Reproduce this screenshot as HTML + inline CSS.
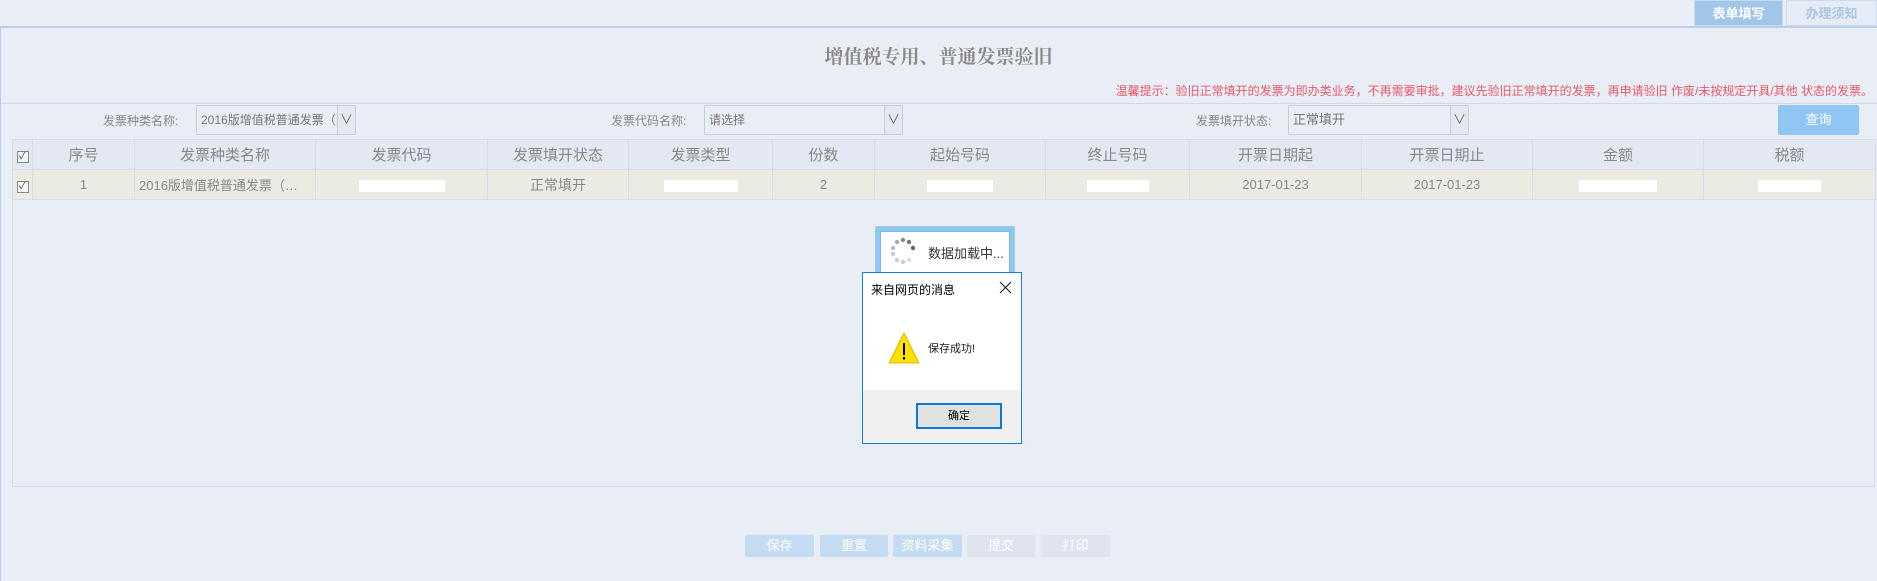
<!DOCTYPE html>
<html><head><meta charset="utf-8"><style>
*{margin:0;padding:0;box-sizing:border-box}
body{width:1877px;height:581px;background:#e9edf5;font-family:"Liberation Sans","Noto Sans CJK SC",sans-serif;position:relative;overflow:hidden;color:#888}
.a{position:absolute}
.tab{top:0;height:26px;font-size:13px;text-align:center;line-height:26px;color:#fff;font-weight:bold}
.lbl{font-size:12px;color:#888;top:112px}
.sel{background:#e9edf5;border:1px solid #c6ccd8;border-radius:2px;height:30px;font-size:12px;color:#777;line-height:28px;padding-left:4px}
.sel b{position:absolute;right:0;top:0;width:18px;height:28px;border-left:1px solid #c6ccd8;background:#e4e8f0;font-weight:normal;text-align:center;font-size:13px;color:#666}
table{border-collapse:collapse;position:absolute;left:12px;top:139px;width:1863px;table-layout:fixed}
td,th{border:1px solid #d6dce8;text-align:center;font-weight:normal;color:#888;overflow:hidden;white-space:nowrap}
th{height:30px;background:#e3e8f2;font-size:15px}
td{height:30px;background:#ebebe4;font-size:13px}
.w{display:inline-block;background:#fff;height:12px;vertical-align:middle}
.btn{top:535px;height:22px;font-size:13px;color:#fff;text-align:center;line-height:22px;border-radius:2px}
.cb{display:inline-block;width:12px;height:12px;border:1px solid #888;font-size:10px;line-height:10px;color:#444;background:#f4f4f4}
</style></head><body>
<div class="a" style="left:0;top:26px;width:1877px;height:2px;background:#b7cfe9"></div>
<div class="a" style="left:0;top:26px;width:1px;height:555px;background:#b7cfe9"></div>
<div class="a tab" style="left:1694px;width:89px;background:#a2c6ea;border:1px solid #c5dbef">表单填写</div>
<div class="a tab" style="left:1786px;width:91px;background:#e6ecf6;color:#a9c6e6;border:1px solid #d0dcec">办理须知</div>
<div class="a" style="left:0;width:1877px;top:42px;text-align:center;font-size:19px;font-weight:bold;color:#8a8a8a;font-family:'Liberation Serif','Noto Serif CJK SC',serif">增值税专用、普通发票验旧</div>
<div class="a" style="right:4px;top:82px;font-size:12px;color:#e8596a">温馨提示：验旧正常填开的发票为即办类业务，不再需要审批，建议先验旧正常填开的发票，再申请验旧 作废/未按规定开具/其他 状态的发票。</div>
<div class="a" style="left:1px;top:103px;width:1876px;height:1px;background:#d2d8e4"></div>
<div class="a lbl" style="left:103px">发票种类名称:</div>
<div class="a sel" style="left:196px;top:105px;width:160px">2016版增值税普通发票（:<b>∨</b></div>
<div class="a lbl" style="left:611px">发票代码名称:</div>
<div class="a sel" style="left:704px;top:105px;width:199px">请选择<b>∨</b></div>
<div class="a lbl" style="left:1196px">发票填开状态:</div>
<div class="a sel" style="left:1288px;top:105px;width:181px;font-size:13px">正常填开<b>∨</b></div>
<div class="a" style="left:1778px;top:105px;width:81px;height:30px;background:#90c6f3;border-radius:2px;color:#fff;font-size:13px;text-align:center;line-height:30px">查询</div>
<div class="a" style="left:12px;top:169px;width:1863px;height:318px;border:1px solid #d6dce8;border-top:none"></div>
<table>
<colgroup><col style="width:20px"><col style="width:102px"><col style="width:181px"><col style="width:172px"><col style="width:141px"><col style="width:144px"><col style="width:102px"><col style="width:171px"><col style="width:144px"><col style="width:172px"><col style="width:171px"><col style="width:171px"><col style="width:172px"></colgroup>
<tr><th><span class="cb">✓</span></th><th>序号</th><th>发票种类名称</th><th>发票代码</th><th>发票填开状态</th><th>发票类型</th><th>份数</th><th>起始号码</th><th>终止号码</th><th>开票日期起</th><th>开票日期止</th><th>金额</th><th>税额</th></tr>
<tr><td><span class="cb">✓</span></td><td>1</td><td style="text-align:left;padding-left:4px">2016版增值税普通发票（…</td><td><span class="w" style="width:86px"></span></td><td style="font-size:14px">正常填开</td><td><span class="w" style="width:74px"></span></td><td>2</td><td><span class="w" style="width:66px"></span></td><td><span class="w" style="width:62px"></span></td><td>2017-01-23</td><td>2017-01-23</td><td><span class="w" style="width:78px"></span></td><td><span class="w" style="width:63px"></span></td></tr>
</table>
<div class="a btn" style="left:745px;width:69px;background:#c4dcf2">保存</div>
<div class="a btn" style="left:820px;width:68px;background:#c4dcf2">重置</div>
<div class="a btn" style="left:893px;width:69px;background:#c4dcf2">资料采集</div>
<div class="a btn" style="left:967px;width:68px;background:#dfe4ee">提交</div>
<div class="a btn" style="left:1041px;width:69px;background:#dfe4ee">打印</div>
<div class="a" style="left:875px;top:226px;width:140px;height:62px;background:#8cc8f2;border:1px solid #a8c8e0;border-radius:2px"></div>
<div class="a" style="left:880px;top:231px;width:130px;height:52px;background:#fff;border:1px solid #7fb8e6"></div>
<svg class="a" style="left:888px;top:236px" width="30" height="30" viewBox="0 0 30 30">
<g fill="#999"><circle cx="15" cy="4" r="2.2" fill="#888"/><circle cx="21" cy="6" r="2.2" fill="#777"/><circle cx="25" cy="12" r="2.2" fill="#666"/><circle cx="5" cy="12" r="2.2" fill="#bbb"/><circle cx="9" cy="6" r="2.2" fill="#aaa"/><circle cx="5" cy="18" r="2.2" fill="#ccc"/><circle cx="9" cy="24" r="2.2" fill="#ccc"/><circle cx="15" cy="26" r="2.2" fill="#ccc"/><circle cx="21" cy="24" r="2.2" fill="#ddd"/></g></svg>
<div class="a" style="left:928px;top:243px;font-size:13px;color:#333">数据加载中...</div>
<div class="a" style="left:862px;top:272px;width:160px;height:172px;background:#fff;border:1px solid #1a7fd8"></div>
<div class="a" style="left:871px;top:281px;font-size:12px;color:#000">来自网页的消息</div>
<svg class="a" style="left:999px;top:281px" width="13" height="13" viewBox="0 0 13 13"><path d="M1 1L12 12M12 1L1 12" stroke="#222" stroke-width="1.2"/></svg>
<svg class="a" style="left:887px;top:331px" width="34" height="34" viewBox="0 0 34 34"><polygon points="17,2 32,32 2,32" fill="#fde100" stroke="#e8b400"/><rect x="16" y="12" width="2" height="12" fill="#000"/><rect x="16" y="26" width="2" height="2.5" fill="#000"/></svg>
<div class="a" style="left:928px;top:340px;font-size:11px;color:#222">保存成功!</div>
<div class="a" style="left:863px;top:390px;width:158px;height:53px;background:#f0f0f0"></div>
<div class="a" style="left:916px;top:403px;width:86px;height:26px;background:#e1e1e1;border:2px solid #0a78d7;font-size:11px;color:#000;text-align:center;line-height:22px">确定</div>
</body></html>
